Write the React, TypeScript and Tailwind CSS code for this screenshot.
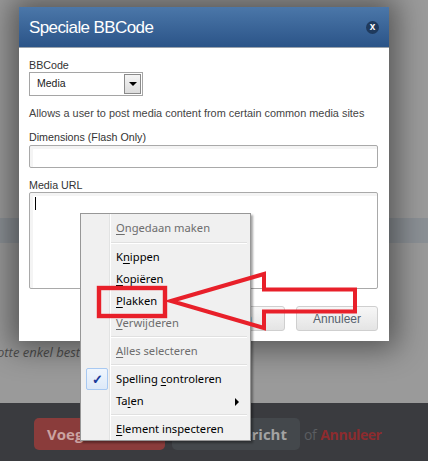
import React from "react";

const ARIAL = { fontFamily: '"Liberation Sans", Arial, sans-serif' };

function MenuItem({
  label,
  u,
  disabled,
  checked,
  submenu,
}: {
  label: string;
  u: number;
  disabled?: boolean;
  checked?: boolean;
  submenu?: boolean;
}) {
  const before = label.slice(0, u);
  const ch = label.slice(u, u + 1);
  const after = label.slice(u + 1);
  return (
    <div className="relative flex h-[22px] items-center">
      <div className="flex w-[29px] shrink-0 items-center justify-center">
        {checked ? (
          <div className="ml-[3px] flex h-[22px] w-[22px] items-center justify-center rounded-[2px] border border-[#a8c9f2] bg-gradient-to-b from-[#f0f6fd] to-[#dde9f8] text-[13px] font-bold leading-none text-[#1b3a9a]">
            ✓
          </div>
        ) : null}
      </div>
      <div
        className={
          "whitespace-nowrap pl-[6px] text-[11.2px] leading-none " +
          (disabled ? "text-[#6d6d6d]" : "text-black")
        }
      >
        {before}
        <span className="underline underline-offset-2">{ch}</span>
        {after}
      </div>
      {submenu ? (
        <div className="absolute right-[11px] top-[8px] h-0 w-0 border-y-[4px] border-l-[4px] border-y-transparent border-l-black" />
      ) : null}
    </div>
  );
}

function Sep({ h = 6 }: { h?: number }) {
  return (
    <div className="flex items-center pl-[30px] pr-[3px]" style={{ height: h }}>
      <div className="w-full border-t border-[#e0e0e0] border-b-white border-b" />
    </div>
  );
}

export default function App() {
  return (
    <div className="relative h-[461px] w-[428px] overflow-hidden bg-[#9a9a9a]">
      {/* page behind overlay */}
      <div className="flex h-full flex-col">
        <div className="h-[218px] bg-[#9b9b9b]" />
        <div className="h-[25px] bg-[#8b9095]" />
        <div className="h-[160px] overflow-hidden bg-[#9a9a9a] pt-[100px]">
          <div
            className="ml-[-3px] whitespace-nowrap text-[13px] italic leading-[18px] text-[#4d4d4d]"
            style={{ fontFamily: '"Open Sans", sans-serif' }}
          >
            otte enkel bestand is 2 MB
          </div>
        </div>
        <div
          className="flex h-[58px] items-start bg-[#3a3b3f] pl-[34px] pt-[15px]"
          style={{ fontFamily: '"Open Sans", sans-serif' }}
        >
          <div className="flex h-[32px] w-[131px] shrink-0 items-center overflow-hidden whitespace-nowrap rounded-[5px] bg-[#8a3c3b] pl-[13px] text-[15px] font-bold text-[#caa3a1]">
            Voeg bericht toe
          </div>
          <div className="ml-[7px] flex h-[32px] w-[128px] shrink-0 items-center justify-end overflow-hidden whitespace-nowrap rounded-[5px] bg-[#44484c] pr-[13px] text-[15px] font-bold text-[#a3a3a3]">
            Voorbeeld bericht
          </div>
          <div className="ml-[4px] flex h-[32px] items-center whitespace-nowrap text-[14px] tracking-[-0.4px]">
            <span className="text-[#5b5d61]">of</span>
            <span className="ml-[4px] font-bold text-[#8d2b2e]">Annuleer</span>
          </div>
        </div>
      </div>

      {/* dialog */}
      <div
        className="absolute left-[19px] top-[7px] w-[370px] bg-white shadow-[0_0_28px_8px_rgba(0,0,0,0.45)]"
        style={ARIAL}
      >
        <div className="flex h-[41px] items-center justify-between border-b border-[#9aa3ad] bg-gradient-to-b from-[#4b77a9] to-[#2b5488] pl-[10px] pr-[10px]">
          <div className="text-[17px] leading-none tracking-[-0.6px] text-white">Speciale BBCode</div>
          <div className="flex h-[13px] w-[13px] items-center justify-center rounded-full bg-[#1f3a5d] text-[10px] font-bold leading-none text-white">
            x
          </div>
        </div>
        <div className="flex flex-col px-[10px] pb-[10px] pt-[10px]">
          <div className="text-[10.7px] leading-[14px] text-[#333]">BBCode</div>
          <div className="flex h-[24px] w-[114px] items-center justify-between border border-[#a5a5a5] pl-[7px] pr-[1px]">
            <span className="text-[10.5px] text-[#222]">Media</span>
            <div className="flex h-[20px] w-[17px] items-center justify-center border border-[#8a8a8a] bg-gradient-to-b from-[#f4f4f4] to-[#dcdcdc]">
              <div className="h-0 w-0 border-x-[4px] border-t-[4px] border-x-transparent border-t-black" />
            </div>
          </div>
          <div className="mt-[10px] whitespace-nowrap text-[10.9px] leading-[15px] text-[#444]">
            Allows a user to post media content from certain common media sites
          </div>
          <div className="mt-[9px] text-[10.7px] leading-[15px] text-[#333]">
            Dimensions (Flash Only)
          </div>
          <div className="h-[23px] w-[349px] rounded-[2px] border border-[#a9a9a9] bg-white shadow-[inset_3px_3px_0_#f4f4f4]" />
          <div className="mt-[10px] text-[10.7px] leading-[14px] text-[#333]">Media URL</div>
          <div className="h-[97px] w-[349px] rounded-[2px] border border-[#a9a9a9] bg-white pl-[4px] pt-[3px] shadow-[inset_3px_3px_0_#f4f4f4]">
            <div className="ml-[1px] mt-[1px] h-[13px] w-px bg-black" />
          </div>
          <div className="mt-[17px] flex justify-end gap-[11px] pr-[1px]">
            <div className="flex h-[25px] w-[88px] items-center justify-end rounded-[3px] border border-[#cfcfcf] bg-gradient-to-b from-[#f7f7f7] to-[#e4e4e4] pr-[32px] text-[12px] text-[#55606c]">
              Invoegen
            </div>
            <div className="flex h-[25px] w-[82px] items-center justify-center rounded-[3px] border border-[#cfcfcf] bg-gradient-to-b from-[#f7f7f7] to-[#e4e4e4] text-[12px] text-[#55606c]">
              Annuleer
            </div>
          </div>
        </div>
      </div>

      {/* context menu */}
      <div
        className="absolute left-[80px] top-[213px] w-[171px] border border-[#979797] bg-[#f0f0f0] pb-0 pt-[3px] shadow-[2px_2px_2px_rgba(0,0,0,0.35)]"
        style={{ fontFamily: '"Noto Sans", "Open Sans", sans-serif' }}
      >
        <div className="absolute bottom-0 left-[28px] top-0 w-[2px] border-l border-[#e2e3e3] border-r border-r-white" />
        <MenuItem label="Ongedaan maken" u={0} disabled />
        <Sep h={7} />
        <MenuItem label="Knippen" u={1} />
        <MenuItem label="Kopiëren" u={0} />
        <MenuItem label="Plakken" u={0} />
        <MenuItem label="Verwijderen" u={0} disabled />
        <Sep />
        <MenuItem label="Alles selecteren" u={0} disabled />
        <Sep />
        <MenuItem label="Spelling controleren" u={9} checked />
        <MenuItem label="Talen" u={2} submenu />
        <Sep />
        <MenuItem label="Element inspecteren" u={0} />
      </div>

      {/* annotation */}
      <svg
        className="pointer-events-none absolute left-0 top-0"
        width="428"
        height="461"
        viewBox="0 0 428 461"
      >
        <rect x="99" y="288" width="66" height="28" fill="none" stroke="#e8202a" strokeWidth="4.4" />
        <polygon
          points="171,301 264,274 264,289.5 355,289.5 355,311.5 264,311.5 264,328"
          fill="none"
          stroke="#e8202a"
          strokeWidth="4"
          strokeLinejoin="miter"
        />
      </svg>
    </div>
  );
}
